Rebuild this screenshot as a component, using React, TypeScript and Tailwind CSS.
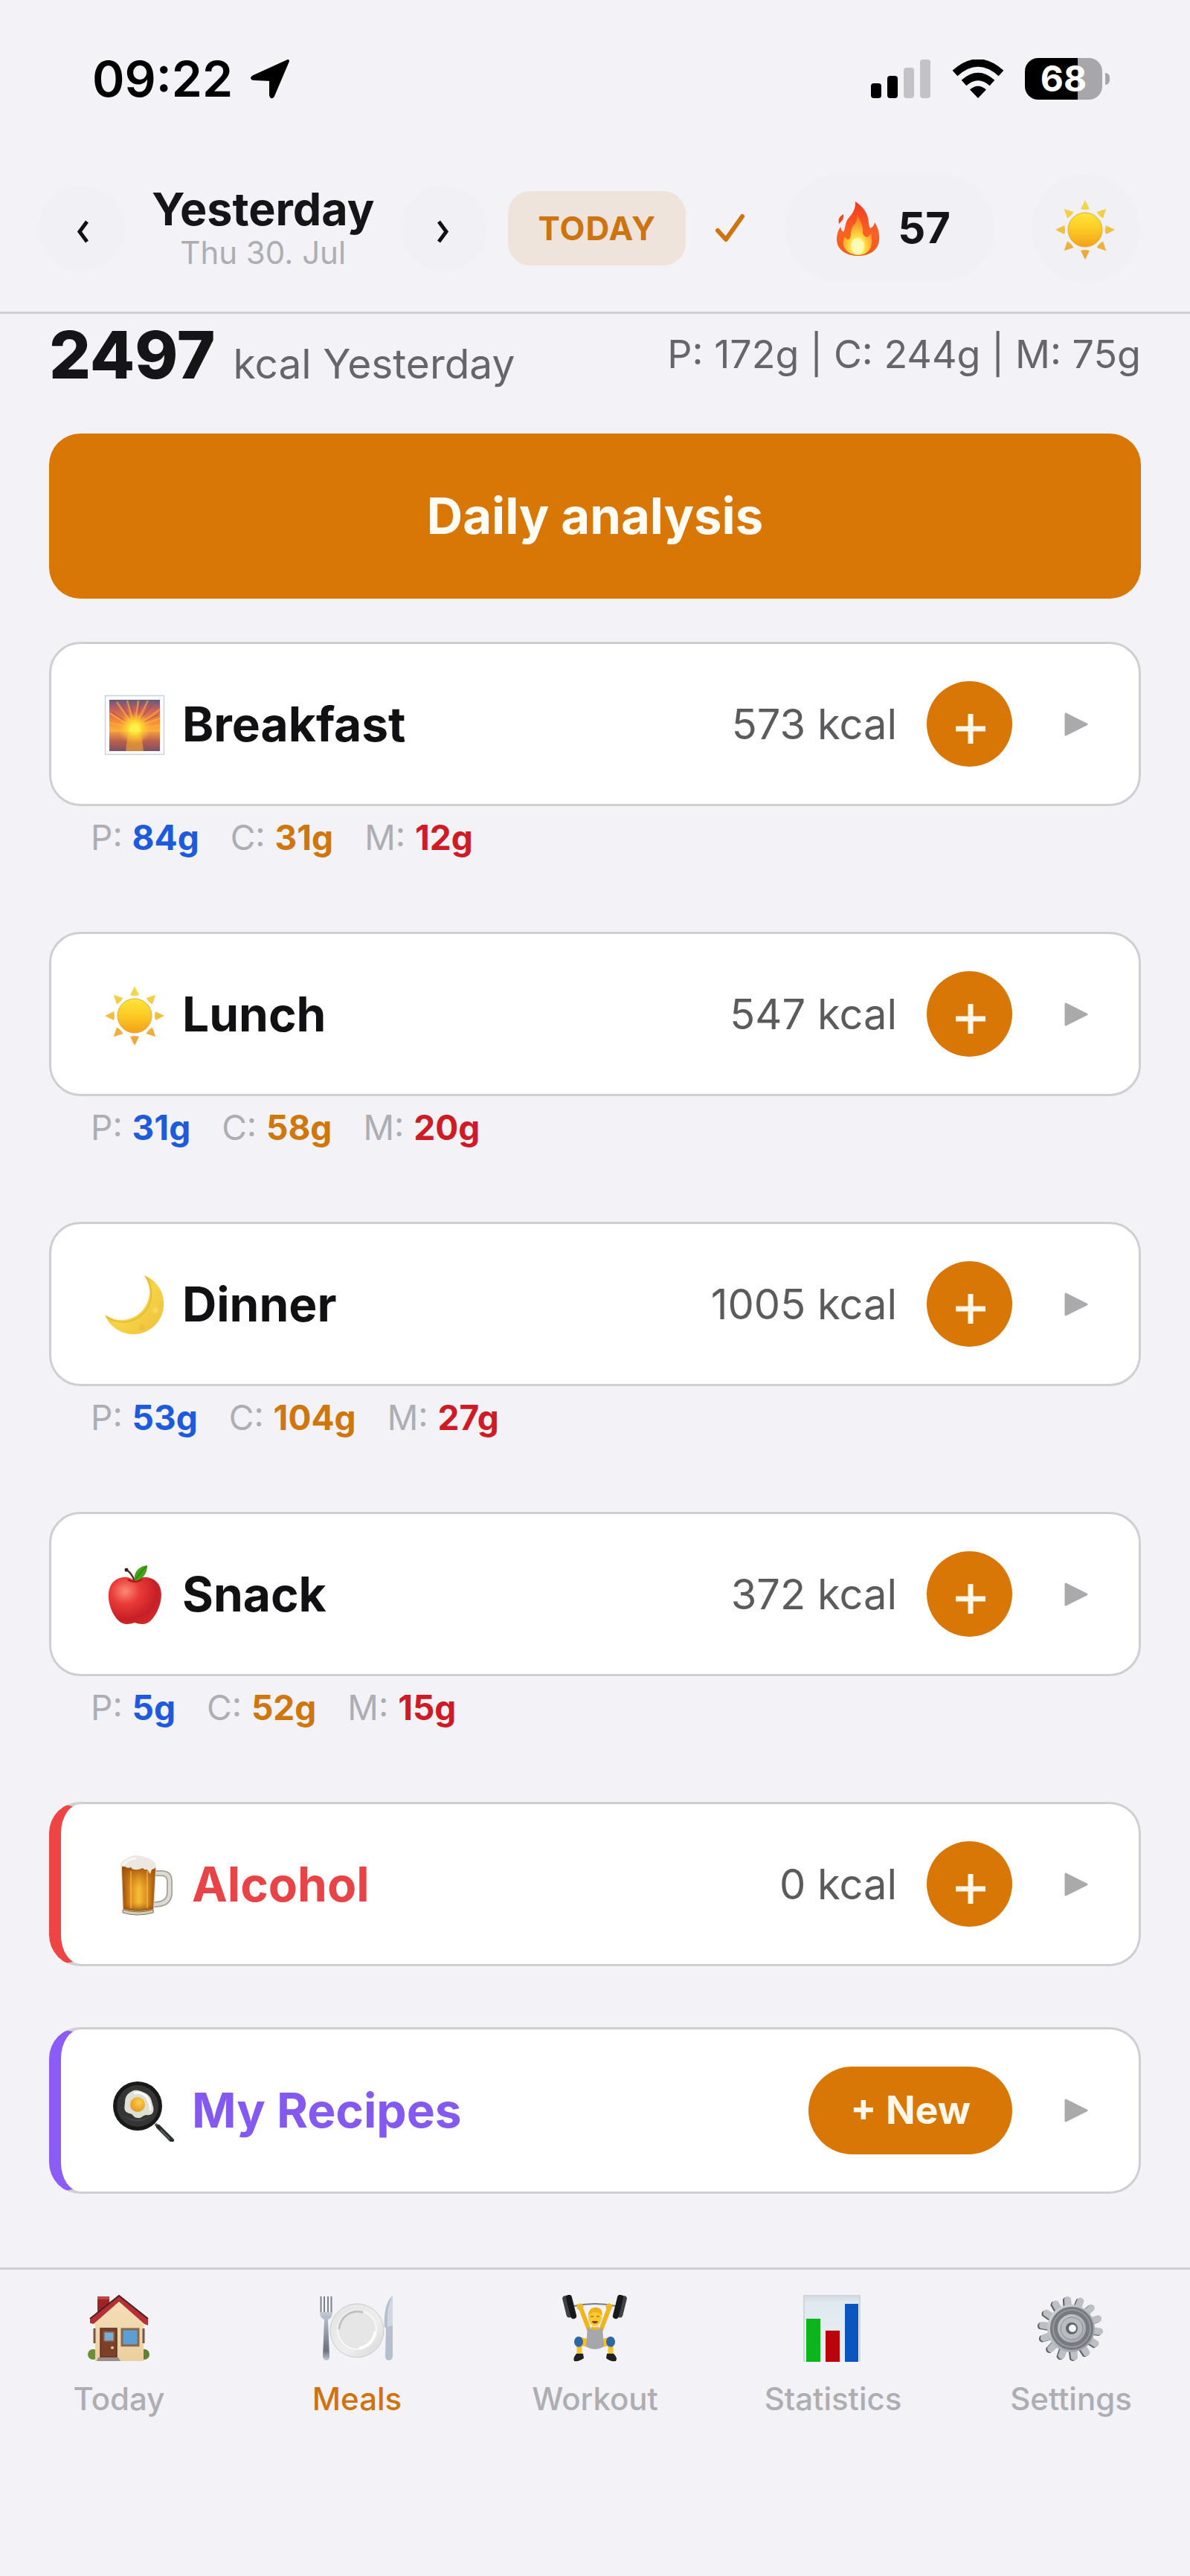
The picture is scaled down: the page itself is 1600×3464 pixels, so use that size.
import React from "react";

/* ---------- Illustrations ---------- */

const rays = Array.from({ length: 8 }, (_, i) => {
  const a = (i * Math.PI) / 4;
  const at = (r: number, w: number) =>
    `${(42 + r * Math.cos(a) - w * Math.sin(a)).toFixed(1)} ${(44 + r * Math.sin(a) + w * Math.cos(a)).toFixed(1)}`;
  return `M${at(40, 0)}L${at(28, 6)}Q${at(26, 0)} ${at(28, -6)}Z`;
}).join("");

const teeth = Array.from({ length: 14 }, (_, i) => {
  const a = (i * Math.PI * 2) / 14 + 0.1;
  const at = (r: number, d: number) =>
    `${(45 + r * Math.cos(a + d)).toFixed(1)} ${(45 + r * Math.sin(a + d)).toFixed(1)}`;
  return `M${at(29, -0.17)}L${at(41, -0.1)}Q${at(46, 0)} ${at(41, 0.12)}L${at(29, 0.17)}Z`;
}).join("");

function Gradients() {
  return (
    <svg className="absolute h-0 w-0" aria-hidden="true">
      <defs>
        <linearGradient id="ray" gradientUnits="userSpaceOnUse" x1="0" y1="4" x2="0" y2="84">
          <stop offset="0" stopColor="#f4dc4a" />
          <stop offset="1" stopColor="#eda23a" />
        </linearGradient>
        <linearGradient id="disc" x1="0" y1="0" x2="0" y2="1">
          <stop offset="0" stopColor="#fde53a" />
          <stop offset="0.5" stopColor="#fcc923" />
          <stop offset="1" stopColor="#f3a01c" />
        </linearGradient>
        <linearGradient id="moon" x1="0" y1="0" x2="1" y2="1">
          <stop offset="0" stopColor="#c9a21f" />
          <stop offset="0.5" stopColor="#f6d447" />
          <stop offset="1" stopColor="#eebf3a" />
        </linearGradient>
        <linearGradient id="flame" x1="0" y1="0" x2="0" y2="1">
          <stop offset="0" stopColor="#ee3b25" />
          <stop offset="0.6" stopColor="#fb6222" />
          <stop offset="1" stopColor="#ee5a1c" />
        </linearGradient>
        <radialGradient id="core" cx="0.5" cy="0.8" r="0.75">
          <stop offset="0" stopColor="#fffbb0" />
          <stop offset="0.3" stopColor="#ffe94a" />
          <stop offset="0.7" stopColor="#fda32c" />
          <stop offset="1" stopColor="#f9702a" />
        </radialGradient>
        <linearGradient id="sky" x1="0" y1="0" x2="0" y2="1">
          <stop offset="0" stopColor="#5f5a80" />
          <stop offset="0.3" stopColor="#c8605c" />
          <stop offset="0.65" stopColor="#f5893a" />
          <stop offset="1" stopColor="#fbb43c" />
        </linearGradient>
        <linearGradient id="sea" x1="0" y1="0" x2="0" y2="1">
          <stop offset="0" stopColor="#f09a40" />
          <stop offset="0.5" stopColor="#b85f4e" />
          <stop offset="1" stopColor="#7c5064" />
        </linearGradient>
        <radialGradient id="glow">
          <stop offset="0" stopColor="#fff86a" />
          <stop offset="0.3" stopColor="#ffe536" />
          <stop offset="1" stopColor="#ffc02a" stopOpacity="0" />
        </radialGradient>
        <radialGradient id="apple" cx="0.32" cy="0.3" r="0.8">
          <stop offset="0" stopColor="#fb8a76" />
          <stop offset="0.35" stopColor="#e93a37" />
          <stop offset="0.75" stopColor="#c61f27" />
          <stop offset="1" stopColor="#d22b2b" />
        </radialGradient>
        <linearGradient id="beer" x1="0" y1="0" x2="1" y2="0">
          <stop offset="0" stopColor="#8a4708" />
          <stop offset="0.25" stopColor="#e08a1a" />
          <stop offset="0.5" stopColor="#fbc43a" />
          <stop offset="0.8" stopColor="#d5831c" />
          <stop offset="1" stopColor="#8f4b0c" />
        </linearGradient>
        <linearGradient id="beerShade" x1="0" y1="0" x2="0" y2="1">
          <stop offset="0" stopColor="#9a4c08" stopOpacity="0.95" />
          <stop offset="0.5" stopColor="#d98214" stopOpacity="0.1" />
          <stop offset="0.8" stopColor="#c87410" stopOpacity="0.1" />
          <stop offset="1" stopColor="#7c3d06" stopOpacity="0.8" />
        </linearGradient>
        <radialGradient id="yolk" cx="0.6" cy="0.35" r="0.7">
          <stop offset="0" stopColor="#fbd04a" />
          <stop offset="1" stopColor="#e5951d" />
        </radialGradient>
        <linearGradient id="wall" x1="0" y1="0" x2="0" y2="1">
          <stop offset="0" stopColor="#f5dfba" />
          <stop offset="1" stopColor="#ead09f" />
        </linearGradient>
        <linearGradient id="steel" x1="0" y1="0" x2="1" y2="1">
          <stop offset="0" stopColor="#d3d7db" />
          <stop offset="1" stopColor="#96999e" />
        </linearGradient>
        <linearGradient id="cutlery" x1="0" y1="0" x2="0" y2="1">
          <stop offset="0" stopColor="#c3cbd6" />
          <stop offset="0.5" stopColor="#8b939d" />
          <stop offset="0.8" stopColor="#6d727a" />
          <stop offset="1" stopColor="#c2cad6" />
        </linearGradient>
        <linearGradient id="plate" x1="0" y1="0" x2="1" y2="1">
          <stop offset="0" stopColor="#e3e3e4" />
          <stop offset="0.6" stopColor="#eeeeef" />
          <stop offset="1" stopColor="#d4d5d7" />
        </linearGradient>
        <linearGradient id="board" x1="0" y1="0" x2="0" y2="1">
          <stop offset="0" stopColor="#d3d9de" />
          <stop offset="0.12" stopColor="#e0e9ef" />
          <stop offset="1" stopColor="#e9f0f5" />
        </linearGradient>
      </defs>
    </svg>
  );
}

type IconProps = { className: string };

function Sun({ className }: IconProps) {
  return (
    <svg viewBox="0 0 84 84" className={className} aria-hidden="true">
      <path d={rays} fill="url(#ray)" />
      <circle cx="42" cy="44" r="23" fill="url(#disc)" stroke="#e3a936" strokeWidth="1" />
    </svg>
  );
}

function Sunrise({ className }: IconProps) {
  return (
    <svg viewBox="0 0 84 84" className={className} aria-hidden="true">
      <rect x="2.500" y="3.500" width="79" height="79" fill="#fbfcfd" stroke="#ccd3d9" strokeWidth="1.500" />
      <rect x="8" y="9" width="68" height="44" fill="url(#sky)" />
      <g stroke="#ffb03c" strokeWidth="2.500" opacity="0.6">
        <path d="M42 47 8 40M42 47 8 27M42 47 18 12M42 47 32 10M42 47 47 10M42 47 60 10M42 47 76 22M42 47 76 34M42 47 76 44" />
      </g>
      <g stroke="#8f4a4a" strokeWidth="1.200" opacity="0.6">
        <path d="M36 33 24 15M40 30 37 12M46 30 51 12M50 34 66 16M30 38 12 26M54 39 74 29" />
      </g>
      <rect x="8" y="52" width="68" height="26" fill="url(#sea)" />
      <path d="M33 54h18l3 24H30Z" fill="#f6a52e" opacity="0.65" />
      <circle cx="42" cy="47" r="22" fill="url(#glow)" />
      <path d="M34 52a8 8 0 0 1 16 0Z" fill="#fff04a" />
    </svg>
  );
}

function Moon({ className }: IconProps) {
  return (
    <svg viewBox="0 0 84 84" className={className} aria-hidden="true">
      <path d="M55 3A41 41 0 1 1 2 56 38 38 0 0 0 55 3Z" fill="url(#moon)" />
      <path d="M5 59A38 38 0 0 0 57 5" fill="none" stroke="#d8ae30" strokeWidth="1.500" opacity="0.7" />
      <circle cx="70" cy="50" r="4" fill="#f9de6a" opacity="0.6" />
      <circle cx="52" cy="73" r="4" fill="#e5b536" opacity="0.4" />
    </svg>
  );
}

function Apple({ className }: IconProps) {
  return (
    <svg viewBox="0 0 84 84" className={className} aria-hidden="true">
      <path d="M42 24C33 15 18 18 11 28 2 42 9 66 20 77c6 6 13 6 22 3 9 3 16 3 22-3C75 66 83 42 74 28 67 18 52 15 42 24Z" fill="url(#apple)" />
      <path d="M33 22q9 6 19 0" fill="none" stroke="#a9181c" strokeWidth="2.500" />
      <path d="M42 24Q38 13 31 9" fill="none" stroke="#5b2a25" strokeWidth="2.500" />
      <circle cx="31" cy="9" r="2.500" fill="#33201c" />
      <path d="M42 24C40 12 48 4 59 3 59 14 53 22 42 24Z" fill="#43a516" />
      <path d="M43 22Q50 12 58 4" fill="none" stroke="#2d8210" strokeWidth="1.500" />
    </svg>
  );
}

function Beer({ className }: IconProps) {
  return (
    <svg viewBox="0 0 84 84" className={className} aria-hidden="true">
      <path d="M57 27h8q11 0 11 11v15q0 16-21 16" fill="none" stroke="#a5a198" strokeWidth="8" />
      <path d="M57 27h8q11 0 11 11v15q0 16-21 16" fill="none" stroke="#dddbd5" strokeWidth="4.500" />
      <path d="M11 17 13 80q22 6 42 0l3-62Z" fill="#dcd3c2" />
      <path d="M12 18 14 75q20 6 40 0l3-57Z" fill="url(#beer)" />
      <path d="M12 18 14 75q20 6 40 0l3-57Z" fill="url(#beerShade)" />
      <path d="M24 24v50M46 24v50" stroke="#ffd56a" strokeWidth="1.500" opacity="0.6" />
      <path d="M13 76q21 6 41 0v4q-21 6-41 0Z" fill="#d6cdbc" stroke="#81735a" strokeWidth="1" />
      <path d="M10 18C9 11 16 9 20 6 28 1 38 3 44 6c6 1 11 4 13 8q2 5-2 7l-3 1-2 6-4-6q-4 1-6-2-12 5-16-1-5 2-8-1Z" fill="#ece8e1" />
      <path d="M13 16q8-9 18-9" fill="none" stroke="#fff" strokeWidth="3" opacity="0.7" />
    </svg>
  );
}

function Pan({ className }: IconProps) {
  return (
    <svg viewBox="0 0 84 84" className={className} aria-hidden="true">
      <path d="M57 60 63 67" stroke="#5b5d5d" strokeWidth="4" />
      <path d="M61 64 79 82" stroke="#2a2d2c" strokeWidth="6" strokeLinecap="round" />
      <path d="M64 68 76 80" stroke="#65696a" strokeWidth="1.500" strokeLinecap="round" />
      <circle cx="33" cy="36" r="33" fill="#171817" />
      <circle cx="33" cy="36" r="28" fill="#343635" />
      <path d="M14 49q18 10 38 0a28 28 0 0 1-38 0Z" fill="#4c4f4e" opacity="0.7" />
      <path d="M24 17c7-5 15 0 20 2 8 4 8 12 10 18 2 9-3 12-9 11-5 0-6 5-12 4-6 0-5-5-11-6-8-2-7-8-6-14 0-7 2-12 8-15Z" fill="#dfdfd6" />
      <path d="M28 19c8-3 14 1 18 6 3 6 5 12 4 17" fill="none" stroke="#fff" strokeWidth="3" opacity="0.8" />
      <circle cx="33" cy="34" r="10" fill="url(#yolk)" />
    </svg>
  );
}

function Fire({ className }: IconProps) {
  return (
    <svg viewBox="0 0 76 76" className={className} aria-hidden="true">
      <path d="M35 2C46 9 52 18 53 30q0 5 2 8 5-2 6-8c5 8 7 16 6 25-2 13-13 20-28 20S11 68 10 54c0-8 2-13 5-18q1 5 4 7c3-6 2-10 5-16C29 20 36 14 35 2Z" fill="url(#flame)" />
      <path d="M19 19C12 23 12 27 13 32 17 28 20 26 19 19Z" fill="#ee4a2a" />
      <path d="M37 20c6 8 9 16 8 24q1 5 5 6 4-1 6-5c3 14 1 28-17 29-18-1-24-14-18-25q2 4 5 4c4-3 2-11 5-17 4-5 7-8 6-16Z" fill="url(#core)" />
      <ellipse cx="38" cy="62" rx="9" ry="11" fill="#fffac0" opacity="0.85" />
    </svg>
  );
}

function House({ className }: IconProps) {
  return (
    <svg viewBox="0 0 90 90" className={className} aria-hidden="true">
      <circle cx="10" cy="80" r="7" fill="#6d8f3a" />
      <circle cx="79" cy="80" r="7" fill="#5f8233" />
      <path d="M45 8 78 38V89H13V38Z" fill="url(#wall)" />
      <path d="M12 45v20M78 45v20" stroke="#7a5544" strokeWidth="3" />
      <path d="M16 2h16v15L16 33Z" fill="#9c2427" />
      <path d="M16 2h16v4H16Z" fill="#c24644" />
      <path d="M45 1 84 32v9L79 39 45 9 11 39 6 38v-6Z" fill="#b62f34" />
      <path d="M6 32 45 1 84 32" fill="none" stroke="#4c2021" strokeWidth="2" />
      <rect x="20" y="45" width="22" height="39" fill="#7b4027" stroke="#5c3122" strokeWidth="1.500" />
      <rect x="25" y="50" width="13" height="12" fill="#75afd9" stroke="#8c6c56" strokeWidth="1.500" />
      <circle cx="36" cy="71" r="2" fill="#e3bf9e" />
      <rect x="49" y="46" width="22" height="22" fill="#5b9fd4" stroke="#8c6647" strokeWidth="3" />
      <path d="M17 84h27l3 5H15Z" fill="#9c8e88" />
    </svg>
  );
}

function Plate({ className }: IconProps) {
  return (
    <svg viewBox="0 0 100 90" className={className} aria-hidden="true">
      <circle cx="50" cy="48" r="36" fill="url(#plate)" stroke="#c9cacc" strokeWidth="1" />
      <circle cx="50" cy="47" r="26" fill="#e6e6e7" stroke="#f8f8f9" strokeWidth="2" />
      <path d="M26 45A25 25 0 0 1 57 23" fill="none" stroke="#bfc0c2" strokeWidth="3" strokeLinecap="round" />
      <path d="M74 50A25 25 0 0 1 54 71" fill="none" stroke="#fff" strokeWidth="3" strokeLinecap="round" />
      <path d="M1.500 2v24M6 2v24M11 2v24M15.500 2v24" stroke="#7c828b" strokeWidth="2" />
      <path d="M0 23h17q0 8-6 10l2 50q0 5-4 5t-5-5l2-50q-6-2-6-10Z" fill="url(#cutlery)" />
      <path d="M98 1v80q0 7-5 7t-5-6l1-37-2-2C86 25 89 8 98 1Z" fill="#b5bfcd" />
      <path d="M98 1v40l-7 2C90 24 92 12 98 1Z" fill="#cfd7e1" />
    </svg>
  );
}

function Lifter({ className }: IconProps) {
  return (
    <svg viewBox="0 0 90 90" className={className} aria-hidden="true">
      <path d="M17 15Q45 9 73 15" fill="none" stroke="#747c84" strokeWidth="2" />
      <g transform="rotate(-14 11 16)">
        <rect x="4" y="0" width="9" height="30" rx="4" fill="#3f4144" />
        <rect x="9" y="0" width="8" height="33" rx="4" fill="#17181a" />
      </g>
      <g transform="rotate(14 78 16)">
        <rect x="76" y="0" width="9" height="30" rx="4" fill="#3f4144" />
        <rect x="72" y="0" width="8" height="33" rx="4" fill="#17181a" />
      </g>
      <path d="M26 18 37 47M64 18 53 47" stroke="#f0b41e" strokeWidth="6" strokeLinecap="round" />
      <circle cx="25" cy="16" r="4.500" fill="#f2b824" />
      <circle cx="64" cy="16" r="4.500" fill="#f2b824" />
      <path d="M40 66 24 62M50 66 66 62" stroke="#f5bd28" strokeWidth="11" strokeLinecap="round" />
      <path d="M24 66V79M66 66V79" stroke="#f5c12c" strokeWidth="7" />
      <path d="M35 44q10 5 20 0l2 25q-5 4-12 4t-12-4Z" fill="#a5a7ac" />
      <path d="M40 44q5 3 10 0" fill="none" stroke="#f0b41e" strokeWidth="4" />
      <ellipse cx="45" cy="30" rx="9" ry="12" fill="#fbc92d" />
      <path d="M36 28q0-10 8-11 11-2 11 11-5-5-10-5t-9 5Z" fill="#eeb01c" />
      <path d="M39 29h4M47 29h4" stroke="#a8751a" strokeWidth="1.500" />
      <path d="M41 36q4 4 8 0-4-1-8 0Z" fill="#8c3d1d" stroke="#8c3d1d" strokeWidth="1" />
      <ellipse cx="23" cy="63" rx="6" ry="7" fill="#2d68a4" />
      <ellipse cx="66" cy="63" rx="6" ry="7" fill="#2d68a4" />
      <path d="M20 79h9l1 6q-6 5-13 4-2-4 3-10ZM61 79h9q6 6 3 10-8 1-13-4Z" fill="#1f2022" />
    </svg>
  );
}

function Chart({ className }: IconProps) {
  return (
    <svg viewBox="0 0 90 90" className={className} aria-hidden="true">
      <rect x="5" y="0" width="77" height="90" fill="url(#board)" />
      <path d="M6 90V1h75v89" fill="none" stroke="#cfd6dc" strokeWidth="2" />
      <rect x="9" y="32" width="19" height="58" fill="#0cb51c" />
      <rect x="35" y="48" width="19" height="42" fill="#b90509" />
      <rect x="61" y="12" width="18" height="78" fill="#0a55bf" />
    </svg>
  );
}

function Gear({ className }: IconProps) {
  return (
    <svg viewBox="0 0 90 90" className={className} aria-hidden="true">
      <path d={teeth} fill="#5e6167" transform="translate(-2 1)" />
      <path d={teeth} fill="#bcc0c5" />
      <circle cx="45" cy="45" r="32" fill="url(#steel)" />
      <circle cx="46" cy="45" r="24" fill="none" stroke="#777b81" strokeWidth="10" />
      <circle cx="46" cy="45" r="25" fill="none" stroke="#94989d" strokeWidth="2" />
      <circle cx="46" cy="45" r="15" fill="#b9bdc2" stroke="#8b8f95" strokeWidth="1" />
      <circle cx="46" cy="45" r="8" fill="#62666b" />
      <circle cx="47" cy="45" r="5" fill="#f5f6f8" />
    </svg>
  );
}

function Chevron({ flip }: { flip?: boolean }) {
  return (
    <svg viewBox="0 0 116 116" className="size-full" aria-hidden="true">
      <path d={flip ? "M51 49 61 62.500 51 76" : "M65 49 55 62.500 65 76"} fill="none" stroke="#111" strokeWidth="5" />
    </svg>
  );
}

function Triangle() {
  return (
    <svg viewBox="0 0 32 32" className="size-8" aria-hidden="true">
      <path d="M2 2 30 16 2 30Z" fill="#aaaaac" stroke="#aaaaac" strokeWidth="3" strokeLinejoin="round" />
    </svg>
  );
}

/* ---------- Page sections ---------- */

function StatusBar() {
  return (
    <div className="flex h-[212px] items-center pr-[108px] pl-[124px] text-black">
      <span className="text-[66px] leading-[80px] font-semibold">09:22</span>
      <svg viewBox="0 0 54 54" className="ml-6 size-[54px]" aria-hidden="true">
        <path d="M50 3 30 50Q28 53 27 49V28L4 27Q0 26 4 24Z" stroke="#000" strokeWidth="4" strokeLinejoin="round" />
      </svg>
      <div className="ml-auto flex items-center">
        <svg viewBox="0 0 81 52" className="h-[52px] w-[81px]" aria-hidden="true">
          <rect x="0" y="32" width="14" height="20" rx="4" />
          <rect x="22" y="22" width="14" height="30" rx="4" />
          <rect x="44" y="11" width="14" height="41" rx="4" fill="#c2c2c7" />
          <rect x="66" y="0" width="14" height="52" rx="4" fill="#c2c2c7" />
        </svg>
        <svg viewBox="0 0 70 52" className="ml-7 h-[52px] w-[70px]" aria-hidden="true">
          <path d="M4 18.500Q35-9.500 66 18.500" fill="none" stroke="#000" strokeWidth="10" />
          <path d="M16 31.500Q35 14.500 54 31.500" fill="none" stroke="#000" strokeWidth="10" />
          <path d="M24 40.500Q35 31 46 40.500L35 52Z" />
        </svg>
        <div className="ml-7 flex h-14 w-[104px] items-center justify-center rounded-[18px] bg-[linear-gradient(to_right,#000_68%,#a6a6ab_68%)] text-[48px] leading-[56px] font-bold text-white">
          68
        </div>
        <div className="ml-1 h-4 w-[6px] rounded-r-full bg-[#a6a6ab]" />
      </div>
    </div>
  );
}

function Header() {
  return (
    <header className="flex h-[210px] items-center border-b-[3px] border-[#cfcfd4] pr-[68px] pb-[18px] pl-[52px]">
      <button aria-label="Previous day" className="size-[116px] shrink-0 rounded-full bg-[#f1f1f5]">
        <Chevron />
      </button>
      <div className="ml-9 flex flex-col items-center whitespace-nowrap">
        <span className="text-[61px] leading-[66px] font-bold text-[#151517]">Yesterday</span>
        <span className="text-[42px] leading-[52px] text-[#aeaeb2]">Thu 30. Jul</span>
      </div>
      <button aria-label="Next day" className="ml-9 size-[116px] shrink-0 rounded-full bg-[#f1f1f5]">
        <Chevron flip />
      </button>
      <button className="ml-7 h-[100px] rounded-[30px] bg-[#efe4dc] px-10 text-[44px] font-bold tracking-wide text-[#cd7410]">
        TODAY
      </button>
      <svg viewBox="0 0 40 40" className="ml-10 size-10 shrink-0" role="img" aria-label="Synced">
        <path d="M3 23 14 35 36 4" fill="none" stroke="#cd7410" strokeWidth="6" strokeLinecap="round" strokeLinejoin="round" />
      </svg>
      <div className="ml-auto flex h-[144px] items-center gap-4 rounded-[72px] bg-[#f1f1f5] px-[60px] text-[58px] font-bold text-[#151517]">
        <Fire className="size-[76px]" />
        57
      </div>
      <button aria-label="Light theme" className="ml-12 flex size-[146px] shrink-0 items-center justify-center rounded-full bg-[#f1f1f5]">
        <Sun className="size-[84px]" />
      </button>
    </header>
  );
}

type Card = {
  name: string;
  icon: (p: IconProps) => React.ReactElement;
  kcal?: string;
  macros?: [string, string, string];
  frame: string;
  title: string;
};

const plain = "border-[#cfcfd1]";
const dark = "text-[#111113]";

const cards: Card[] = [
  { name: "Breakfast", icon: Sunrise, kcal: "573", macros: ["84", "31", "12"], frame: plain, title: dark },
  { name: "Lunch", icon: Sun, kcal: "547", macros: ["31", "58", "20"], frame: plain, title: dark },
  { name: "Dinner", icon: Moon, kcal: "1005", macros: ["53", "104", "27"], frame: plain, title: dark },
  { name: "Snack", icon: Apple, kcal: "372", macros: ["5", "52", "15"], frame: plain, title: dark },
  { name: "Alcohol", icon: Beer, kcal: "0", frame: "border-[#cfcfd1] border-l-[16px] border-l-[#ef4444] mb-[82px]", title: "text-[#e84347]" },
  { name: "My Recipes", icon: Pan, frame: "border-[#cfcfd1] border-l-[16px] border-l-[#8b5cf6] mb-[99px]", title: "text-[#8459ef]" },
];

function Macro({ label, value, color }: { label: string; value: string; color: string }) {
  return (
    <span>
      {label}: <b className={color}>{value}g</b>
    </span>
  );
}

function MealCard({ card }: { card: Card }) {
  const Icon = card.icon;
  return (
    <section>
      <div className={`flex items-center rounded-[42px] border-[3px] bg-white py-[50px] pr-[68px] pl-[70px] ${card.frame}`}>
        <Icon className="size-[84px] shrink-0" />
        <h2 className={`ml-[22px] text-[64px] leading-[80px] font-bold ${card.title}`}>{card.name}</h2>
        {card.kcal !== undefined ? (
          <>
            <span className="ml-auto text-[56px] leading-[72px] text-[#5b5b5e]">{card.kcal} kcal</span>
            <button aria-label={`Add to ${card.name}`} className="ml-10 size-[115px] shrink-0 rounded-full bg-[#d97706]">
              <svg viewBox="0 0 115 115" className="size-full" aria-hidden="true">
                <path d="M39 64H79M59 44V84" stroke="#fff8ea" strokeWidth="7" />
              </svg>
            </button>
          </>
        ) : (
          <button className="ml-auto h-[118px] rounded-full bg-[#d97706] px-[56px] text-[52px] font-bold text-[#fff8ea]">
            + New
          </button>
        )}
        <button aria-label={`Expand ${card.name}`} className="ml-[70px] shrink-0">
          <Triangle />
        </button>
      </div>
      {card.macros && (
        <div className="mt-4 mb-[101px] flex gap-[42px] pl-14 text-[46px] leading-[52px] text-[#aeaeb2]">
          <Macro label="P" value={card.macros[0]} color="text-[#1d5bdc]" />
          <Macro label="C" value={card.macros[1]} color="text-[#cf760c]" />
          <Macro label="M" value={card.macros[2]} color="text-[#cf1b26]" />
        </div>
      )}
    </section>
  );
}

const tabs = [
  { name: "Today", icon: House, box: "h-[90px] w-[90px]", color: "text-[#aeaeb2]" },
  { name: "Meals", icon: Plate, box: "h-[90px] w-[100px]", color: "text-[#cf7210]" },
  { name: "Workout", icon: Lifter, box: "h-[90px] w-[90px]", color: "text-[#aeaeb2]" },
  { name: "Statistics", icon: Chart, box: "h-[90px] w-[90px]", color: "text-[#aeaeb2]" },
  { name: "Settings", icon: Gear, box: "h-[90px] w-[90px]", color: "text-[#aeaeb2]" },
];

export default function App() {
  return (
    <div className="flex min-h-screen flex-col bg-[#f2f2f7] font-['Inter',sans-serif]">
      <Gradients />
      <StatusBar />
      <Header />
      <main className="px-[66px]">
        <div className="flex items-center justify-between">
          <p className="flex items-baseline gap-6 text-[#66666a]">
            <b className="text-[88px] leading-[110px] font-extrabold text-[#151517]">2497</b>
            <span className="text-[55px] leading-[72px]">kcal Yesterday</span>
          </p>
          <p className="text-[52px] leading-[72px] text-[#66666a]">P: 172g | C: 244g | M: 75g</p>
        </div>
        <button className="mt-[51px] mb-[58px] block h-[222px] w-full rounded-[42px] bg-[#d97706] text-[67px] font-bold text-[#fffdf6]">
          Daily analysis
        </button>
        {cards.map((card) => (
          <MealCard key={card.name} card={card} />
        ))}
      </main>
      <nav className="flex grow border-t-[3px] border-[#cfcfd4] pt-[34px]">
        {tabs.map(({ name, icon: Icon, box, color }) => (
          <a key={name} href={`#${name.toLowerCase()}`} className={`flex flex-1 flex-col items-center gap-6 text-[42px] leading-[52px] font-medium ${color}`}>
            <Icon className={box} />
            {name}
          </a>
        ))}
      </nav>
    </div>
  );
}
